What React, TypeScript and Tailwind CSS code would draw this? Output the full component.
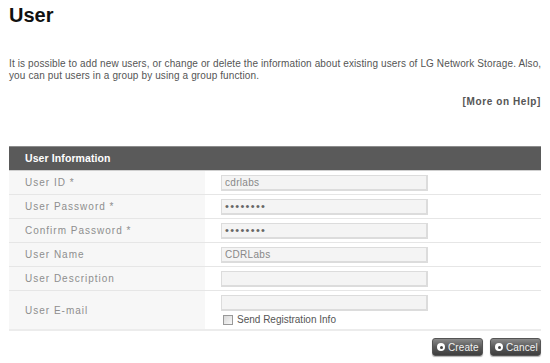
const rows = [
  { label: "User ID *", value: "cdrlabs" },
  { label: "User Password *", value: "••••••••", secret: true },
  { label: "Confirm Password *", value: "••••••••", secret: true },
  { label: "User Name", value: "CDRLabs" },
  { label: "User Description", value: "" },
];

const Field = ({ value, secret }: { value: string; secret?: boolean }) => (
  <div
    className={`w-[207px] h-[16px] bg-[#f4f4f4] border border-[#dcdcdc] border-b-2 border-r-2 pl-[3px] flex items-center ${
      secret ? "text-[11px] tracking-[1.3px] text-[#666]" : "text-[10px] tracking-[0.3px] text-[#888]"
    }`}
  >
    {value}
  </div>
);

const Btn = ({ label }: { label: string }) => (
  <button className="h-[18px] w-[51px] pl-[4px] flex items-center gap-[3px] rounded-[3px] bg-gradient-to-b from-[#8a8a8a] via-[#5a5a5a] to-[#3e3e3e] border border-[#555] text-[#f2f2f2] text-[10px] tracking-[0.1px] shadow-[0_1px_1px_rgba(0,0,0,0.3)]">
    <span className="w-[8px] h-[8px] rounded-full bg-white flex items-center justify-center">
      <span className="w-[3px] h-[3px] rounded-full bg-[#444]" />
    </span>
    {label}
  </button>
);

export default function App() {
  return (
    <div className="w-[550px] h-[363px] bg-white px-[9px] overflow-hidden font-['Liberation_Sans',Arial,sans-serif]">
      <h1 className="pt-[3px] text-[20px] leading-[24px] font-bold text-[#111]">User</h1>

      <p className="mt-[31px] text-[10px] leading-[12px] text-[#555] tracking-[0.12px] whitespace-nowrap">
        It is possible to add new users, or change or delete the information about existing users of LG Network Storage. Also,
        <br />
        you can put users in a group by using a group function.
      </p>

      <div className="mt-[14px] text-right text-[10px] leading-[12px] font-bold text-[#555] tracking-[0.6px]">
        [More on Help]
      </div>

      <div className="mt-[38px] border-t border-[#8c8c8c]">
        <div className="h-[23px] bg-[#5a5a5a] pl-[16px] flex items-center text-[10.5px] font-bold text-white tracking-[0.1px]">
          User Information
        </div>
        <div className="border-t border-[#cfcfcf]">
          {rows.map((r) => (
            <div key={r.label} className="flex h-[24px] border-b border-[#e6e6e6]">
              <div className="w-[196px] bg-[#f7f7f7] pl-[16px] flex items-center text-[10px] text-[#8e8e8e] tracking-[1px]">
                {r.label}
              </div>
              <div className="flex-1 pl-[16px] flex items-center">
                <Field value={r.value} secret={r.secret} />
              </div>
            </div>
          ))}
          <div className="flex h-[40px] border-b-2 border-[#ececec]">
            <div className="w-[196px] bg-[#f7f7f7] pl-[16px] flex items-center text-[10px] text-[#8e8e8e] tracking-[1px]">
              User E-mail
            </div>
            <div className="flex-1 pl-[16px] pt-[4px] flex flex-col gap-[3px]">
              <Field value="" />
              <label className="flex items-center gap-[4px] text-[10px] leading-[12px] text-[#555]">
                <span className="w-[10px] h-[10px] ml-[2px] border border-[#999] bg-gradient-to-br from-[#d8d8d8] to-[#f8f8f8]" />
                Send Registration Info
              </label>
            </div>
          </div>
        </div>
      </div>

      <div className="mt-[7px] flex justify-end gap-[7px]">
        <Btn label="Create" />
        <Btn label="Cancel" />
      </div>
    </div>
  );
}
